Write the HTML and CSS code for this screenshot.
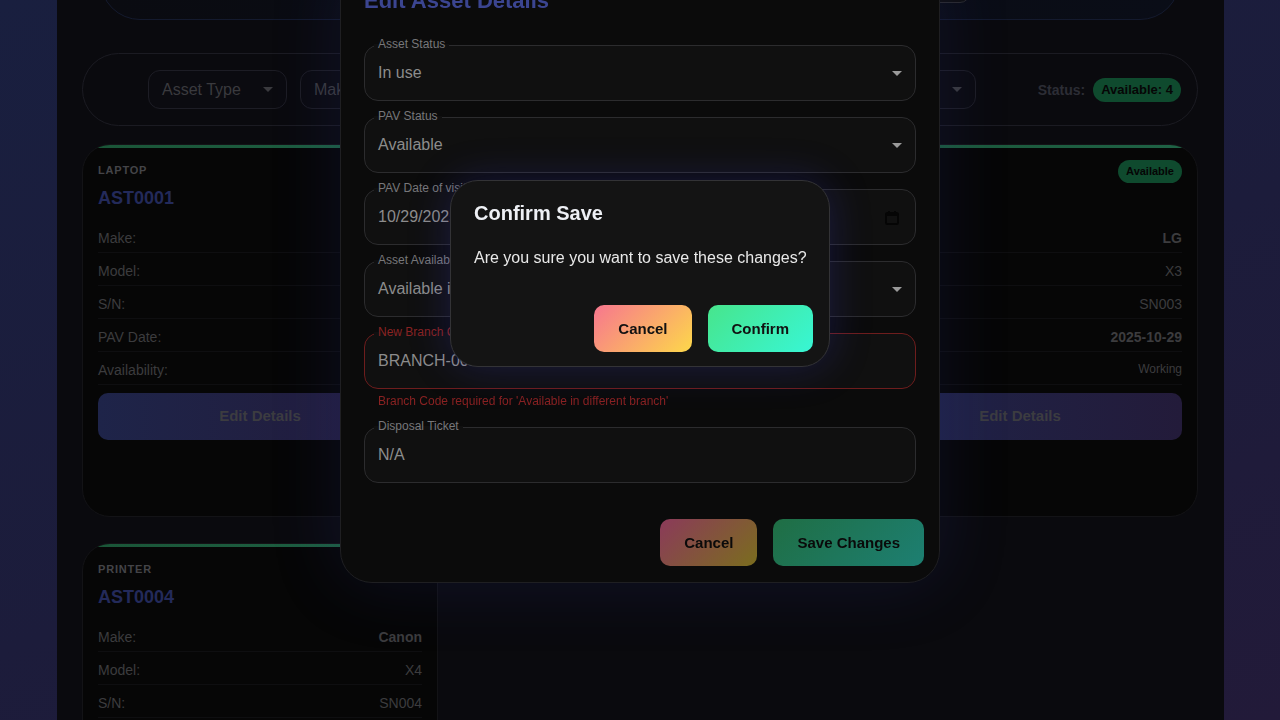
FILE: index.html
```html
<!DOCTYPE html>
<html lang="en">
<head>
<meta charset="utf-8">
<title>Assets</title>
<link rel="stylesheet" href="styles.css">
</head>
<body>
<div class="page">
  <div class="top-card">
    <div class="top-btn"></div>
  </div>

  <div class="filter-bar">
    <div class="select w139"><span>Asset Type</span><svg class="caret" width="10" height="5" viewBox="0 0 10 5"><path d="M0 0h10L5 5z"/></svg></div>
    <div class="select w139"><span>Make</span><svg class="caret" width="10" height="5" viewBox="0 0 10 5"><path d="M0 0h10L5 5z"/></svg></div>
    <div class="select w139"><span>Model</span><svg class="caret" width="10" height="5" viewBox="0 0 10 5"><path d="M0 0h10L5 5z"/></svg></div>
    <div class="spacer"></div>
    <div class="select auto"><span>Availability: Working</span><svg class="caret" width="10" height="5" viewBox="0 0 10 5"><path d="M0 0h10L5 5z"/></svg></div>
    <div class="status-group">
      <span class="status-label">Status:</span>
      <span class="status-badge">Available: 4</span>
    </div>
  </div>

  <div class="cards">
    <div class="card">
      <div class="card-head"><span class="type">Laptop</span><span class="badge-sm">Available</span></div>
      <div class="asset-id">AST0001</div>
      <div class="row"><span>Make:</span><span class="b">Dell</span></div>
      <div class="row"><span>Model:</span><span>X1</span></div>
      <div class="row"><span>S/N:</span><span>SN001</span></div>
      <div class="row"><span>PAV Date:</span><span class="b">2025-10-29</span></div>
      <div class="row"><span>Availability:</span><span class="sm">Working</span></div>
      <div class="edit-btn">Edit Details</div>
    </div>
    <div class="card">
      <div class="card-head"><span class="type">Desktop</span><span class="badge-sm">Available</span></div>
      <div class="asset-id">AST0002</div>
      <div class="row"><span>Make:</span><span class="b">HP</span></div>
      <div class="row"><span>Model:</span><span>X2</span></div>
      <div class="row"><span>S/N:</span><span>SN002</span></div>
      <div class="row"><span>PAV Date:</span><span class="b">2025-10-29</span></div>
      <div class="row"><span>Availability:</span><span class="sm">Working</span></div>
      <div class="edit-btn">Edit Details</div>
    </div>
    <div class="card">
      <div class="card-head"><span class="type">Monitor</span><span class="badge-sm">Available</span></div>
      <div class="asset-id">AST0003</div>
      <div class="row"><span>Make:</span><span class="b">LG</span></div>
      <div class="row"><span>Model:</span><span>X3</span></div>
      <div class="row"><span>S/N:</span><span>SN003</span></div>
      <div class="row"><span>PAV Date:</span><span class="b">2025-10-29</span></div>
      <div class="row"><span>Availability:</span><span class="sm">Working</span></div>
      <div class="edit-btn">Edit Details</div>
    </div>
    <div class="card">
      <div class="card-head"><span class="type">Printer</span><span class="badge-sm">Available</span></div>
      <div class="asset-id">AST0004</div>
      <div class="row"><span>Make:</span><span class="b">Canon</span></div>
      <div class="row"><span>Model:</span><span>X4</span></div>
      <div class="row"><span>S/N:</span><span>SN004</span></div>
      <div class="row"><span>PAV Date:</span><span class="b">2025-10-29</span></div>
      <div class="row"><span>Availability:</span><span class="sm">Working</span></div>
      <div class="edit-btn">Edit Details</div>
    </div>
  </div>
</div>

<div class="modal">
  <h2 class="modal-title">Edit Asset Details</h2>
  <div class="fields">
    <div class="field"><label>Asset Status</label><span class="val">In use</span><svg class="fcaret" width="10" height="5" viewBox="0 0 10 5"><path d="M0 0h10L5 5z"/></svg></div>
    <div class="field"><label>PAV Status</label><span class="val">Available</span><svg class="fcaret" width="10" height="5" viewBox="0 0 10 5"><path d="M0 0h10L5 5z"/></svg></div>
    <div class="field date"><label>PAV Date of visit</label><span class="val">10/29/2025</span>
      <svg class="cal" width="14" height="15" viewBox="0 0 14 15"><rect x="1" y="3" width="12" height="11" rx="1.5" fill="none" stroke="#050505" stroke-width="2"/><rect x="1" y="3" width="12" height="3" fill="#050505"/><path d="M4 1v3M10 1v3" stroke="#050505" stroke-width="2"/></svg></div>
    <div class="field"><label>Asset Availability</label><span class="val">Available in different branch</span><svg class="fcaret" width="10" height="5" viewBox="0 0 10 5"><path d="M0 0h10L5 5z"/></svg></div>
    <div class="field-wrap">
      <div class="field error"><label>New Branch Code</label><span class="val">BRANCH-001</span></div>
      <div class="helper">Branch Code required for 'Available in different branch'</div>
    </div>
    <div class="field"><label>Disposal Ticket</label><span class="val">N/A</span></div>
  </div>
  <div class="actions">
    <button class="btn cancel-dim">Cancel</button>
    <button class="btn save-dim">Save Changes</button>
  </div>
</div>

<div class="confirm">
  <h3 class="confirm-title">Confirm Save</h3>
  <p class="confirm-text">Are you sure you want to save these changes?</p>
  <div class="confirm-actions">
    <button class="btn cancel">Cancel</button>
    <button class="btn ok">Confirm</button>
  </div>
</div>
</body>
</html>
```

FILE: styles.css
```css
html, body {
  margin: 0;
  padding: 0;
  height: 720px;
  overflow: hidden;
}
body {
  font-family: "Liberation Sans", Arial, sans-serif;
  background: linear-gradient(160deg, #191f3f 0%, #1c1c3b 55%, #221a39 100%);
}
.page {
  margin: 0 56px 0 57px;
  height: 720px;
  background: #0a0a0e;
  padding: 0 26px 0 25px;
  box-sizing: border-box;
  overflow: hidden;
}
.top-card {
  margin: -60px 18px 0;
  height: 80px;
  box-sizing: border-box;
  border: 1px solid #141a2e;
  border-radius: 40px;
  background: linear-gradient(90deg, #0a0b11, #0a0d17);
  display: flex;
  justify-content: flex-end;
  align-items: flex-end;
  padding: 0 209px 16px 0;
}
.top-btn {
  width: 260px;
  height: 40px;
  box-sizing: border-box;
  border: 1px solid #2a2a2e;
  border-radius: 10px;
  background: #0e0e10;
}
.filter-bar {
  margin-top: 33px;
  border: 1px solid #1b1b22;
  border-radius: 37px;
  padding: 16px 16px 16px 65px;
  display: flex;
  align-items: center;
  gap: 13px;
}
.select {
  height: 39px;
  box-sizing: border-box;
  border: 1px solid #1d1d25;
  border-radius: 12px;
  background: #0b0b10;
  display: flex;
  align-items: center;
  justify-content: space-between;
  padding: 0 13px 0 13px;
  font-size: 16px;
  color: #3a3a3e;
}
.select.w139 { width: 139px; }
.select.auto { gap: 13px; margin-right: 49px; }
.caret { fill: #3a3a3e; flex: none; }
.spacer { flex: 1; }
.status-group {
  display: flex;
  align-items: center;
  gap: 8px;
}
.status-label {
  font-size: 14px;
  font-weight: bold;
  color: #2c2d35;
}
.status-badge {
  height: 24px;
  line-height: 24px;
  padding: 0 8px;
  border-radius: 12px;
  background: #0f4a2e;
  color: #060606;
  font-size: 13px;
  font-weight: bold;
}
.cards {
  margin-top: 18px;
  display: grid;
  grid-template-columns: repeat(3, 1fr);
  column-gap: 24px;
  row-gap: 26px;
}
.card {
  position: relative;
  min-height: 373px;
  box-sizing: border-box;
  background: #060606;
  border: 1px solid #131316;
  border-radius: 28px;
  padding: 15px 15px;
  overflow: hidden;
}
.card::before {
  content: "";
  position: absolute;
  left: 0;
  right: 0;
  top: 0;
  height: 3px;
  background: linear-gradient(90deg, #1a5537, #1f6346);
}
.card-head {
  display: flex;
  justify-content: space-between;
  align-items: flex-start;
  height: 24px;
}
.type {
  font-size: 11px;
  font-weight: bold;
  letter-spacing: 0.8px;
  text-transform: uppercase;
  color: #444448;
  line-height: 20px;
}
.badge-sm {
  height: 23px;
  line-height: 23px;
  padding: 0 8px;
  border-radius: 12px;
  background: #0f4a2e;
  color: #050505;
  font-size: 11px;
  font-weight: bold;
}
.asset-id {
  margin: 3px 0 11px;
  font-size: 18px;
  line-height: 22px;
  font-weight: bold;
  color: #232a5a;
}
.row {
  display: flex;
  justify-content: space-between;
  align-items: center;
  padding: 10px 0 6px;
  line-height: 16px;
  font-size: 14px;
  color: #3c3c3e;
  border-bottom: 1px solid #0e0e10;
}
.row .b { font-weight: bold; }
.row .sm { font-size: 12px; line-height: 12px; margin-top: -3px; }
.edit-btn {
  margin-top: 8px;
  height: 47px;
  line-height: 46px;
  border-radius: 10px;
  background: linear-gradient(90deg, #1e2449, #231b3a);
  color: #3c3c40;
  font-size: 15px;
  font-weight: bold;
  text-align: center;
}

/* Edit modal */
.modal {
  position: fixed;
  left: 340px;
  top: -38px;
  width: 600px;
  box-sizing: border-box;
  background: #0b0b0b;
  border: 1px solid #1f1f22;
  border-radius: 32px;
  padding: 24px 23px 16px;
  box-shadow: 0 0 70px rgba(45, 55, 160, 0.18);
  z-index: 10;
}
.modal-title {
  margin: 0 0 30px;
  font-size: 22px;
  line-height: 28px;
  font-weight: bold;
  color: #3b4590;
}
.fields {
  display: flex;
  flex-direction: column;
  gap: 16px;
}
.field {
  position: relative;
  height: 56px;
  box-sizing: border-box;
  border: 1px solid #2c2c2e;
  border-radius: 14px;
  background: #101010;
  display: flex;
  align-items: center;
  padding: 0 13px;
  font-size: 16px;
  color: #8c8c8c;
}
.field label {
  position: absolute;
  top: -9px;
  left: 9px;
  padding: 0 4px;
  font-size: 12px;
  line-height: 14px;
  color: #77777a;
  background: linear-gradient(#0b0b0b 50%, #101010 50%);
}
.field .val { flex: 1; white-space: nowrap; }
.fcaret { fill: #9a9a9a; flex: none; }
.field.date { padding-right: 16px; }
.cal { flex: none; }
.field.error { border-color: #6e1d1d; }
.field.error label { color: #8a2323; }
.helper {
  margin-top: 2px;
  padding-left: 14px;
  font-size: 12px;
  line-height: 20px;
  color: #8a2222;
}
.actions {
  margin-top: 36px;
  margin-right: -8px;
  display: flex;
  justify-content: flex-end;
  gap: 16px;
}
.btn {
  height: 47px;
  padding: 0 24px;
  border: none;
  border-radius: 10px;
  font-family: "Liberation Sans", Arial, sans-serif;
  font-size: 15px;
  font-weight: bold;
  color: #0a0a0a;
  white-space: nowrap;
}
.cancel-dim { background: linear-gradient(135deg, #8b3a5a, #7a6d1e); }
.save-dim { background: linear-gradient(135deg, #1f6e44, #1d7f72); }

/* Confirm dialog */
.confirm {
  position: fixed;
  left: 450px;
  top: 180px;
  width: 380px;
  box-sizing: border-box;
  background: #141414;
  border: 1px solid #333336;
  border-radius: 28px;
  padding: 20px 23px 14px;
  box-shadow: 0 0 40px rgba(60, 60, 210, 0.25);
  z-index: 20;
}
.confirm-title {
  margin: 0 0 23px;
  font-size: 20px;
  line-height: 24px;
  font-weight: bold;
  color: #eef0f5;
}
.confirm-text {
  margin: 0 0 37px;
  font-size: 16px;
  line-height: 20px;
  color: #e8e8e8;
  white-space: nowrap;
}
.confirm-actions {
  margin-right: -7px;
  display: flex;
  justify-content: flex-end;
  gap: 16px;
}
.btn.cancel { background: linear-gradient(135deg, #f7768f, #fdd84a); color: #111; }
.btn.ok { background: linear-gradient(135deg, #47e58c, #38f6d5); color: #111; }
```
